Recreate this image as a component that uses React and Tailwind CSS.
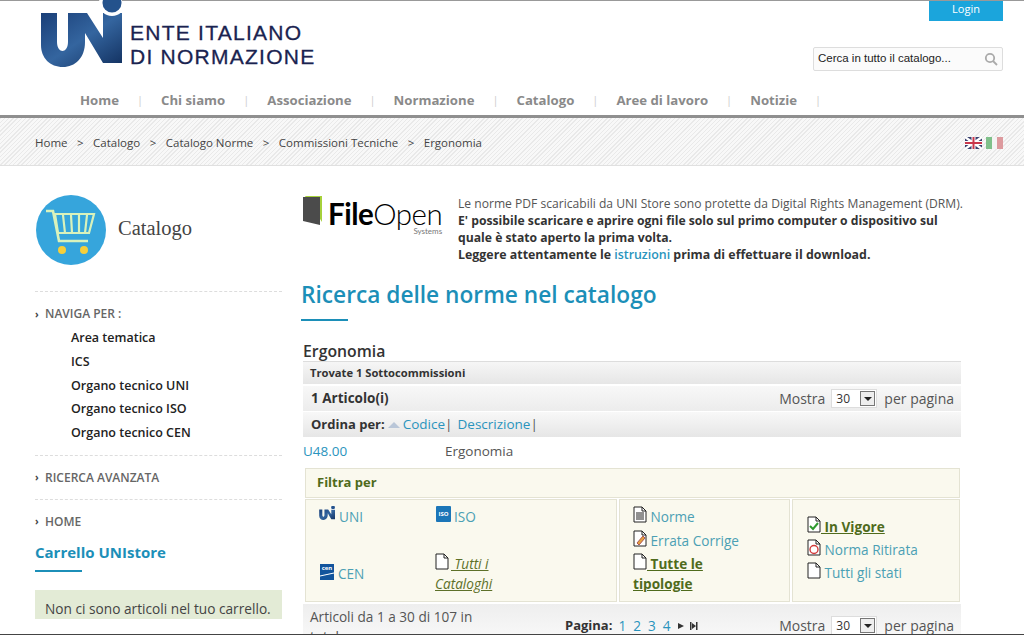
import React from 'react';

const NAV = ['Home', 'Chi siamo', 'Associazione', 'Normazione', 'Catalogo', 'Aree di lavoro', 'Notizie'];
const CRUMBS = ['Home', 'Catalogo', 'Catalogo Norme', 'Commissioni Tecniche', 'Ergonomia'];
const NAVIGA = ['Area tematica', 'ICS', 'Organo tecnico UNI', 'Organo tecnico ISO', 'Organo tecnico CEN'];

function UniLogo({ className }) {
  return (
    <svg viewBox="0 0 82 68" className={className}>
      <defs>
        <linearGradient id="uni" x1="0" y1="0" x2="1" y2="1">
          <stop offset="0" stopColor="#1a3f78" />
          <stop offset="0.5" stopColor="#34659f" />
          <stop offset="1" stopColor="#12305f" />
        </linearGradient>
      </defs>
      <path
        d="M1 13H17V42C17 48 20 51 22.5 51C25 51 28 48 28 42V13H47L63 38V13H82V63H63L45 33V42C45 58 35 67 23 67C10 67 1 58 1 45Z"
        fill="url(#uni)"
      />
      <circle cx="72" cy="3" r="13" fill="#fff" />
      <circle cx="72" cy="3" r="9.5" fill="#24528c" />
    </svg>
  );
}

function CartIcon() {
  return (
    <div className="w-[70px] h-[70px] rounded-full bg-[#36a5dc] flex items-center justify-center">
      <svg viewBox="0 0 70 70" className="w-[70px] h-[70px]" fill="none" stroke="#d9f2bb" strokeWidth="2.2">
        <path d="M10 16h7l6 30h29" strokeWidth="2.6" />
        <path d="M19 19h39l-5 19H22z" />
        <path d="M27 20l2 18M35 20l1 18M43 20l0 18M51 20l-2 18" />
        <circle cx="26" cy="55" r="4" fill="#f6cf3a" stroke="none" />
        <circle cx="48" cy="55" r="4" fill="#f6cf3a" stroke="none" />
      </svg>
    </div>
  );
}

function FileOpenLogo() {
  return (
    <div className="w-[140px] h-[40px] shrink-0 flex items-start">
      <svg viewBox="0 0 20 30" className="w-[20px] h-[30px] mt-0">
        <path d="M2 1h17v26z" fill="#a6d13a" />
        <path d="M0 2l17 0v28L0 26z" fill="#4b4b4b" />
      </svg>
      <div className="ml-[5px] flex flex-col items-end font-['Lato',sans-serif] text-black">
        <div className="text-[29.5px] leading-[36px] mt-px whitespace-nowrap tracking-[-0.5px]">
          <span className="font-bold">File</span>
          <span className="font-light">Open</span>
        </div>
        <div className="text-[8px] leading-[6px] text-[#777] mt-[-4px]">Systems</div>
      </div>
    </div>
  );
}

function FileIcon({ children }) {
  return (
    <svg viewBox="0 0 14 17" className="w-[14px] h-[17px] inline-block align-[-1px]" fill="#fff" stroke="#222" strokeWidth="1">
      <path d="M1 1h8l4 4v11H1z" />
      <path d="M9 1v4h4" fill="none" />
      {children}
    </svg>
  );
}

function Select() {
  return (
    <span className="inline-flex w-[46px] h-[19px] bg-white border border-[#ddd] items-center justify-between pl-[4px] pr-px text-[12px] text-[#333]">
      30
      <span className="w-[15px] h-[15px] border border-[#777] bg-[#eee] flex items-center justify-center">
        <span className="w-0 h-0 border-x-[4px] border-x-transparent border-t-[4px] border-t-[#222]" />
      </span>
    </span>
  );
}

function PerPage() {
  return (
    <div className="flex items-center text-[14px] text-[#555]">
      Mostra
      <span className="ml-[6px] mr-[7px] flex"><Select /></span>
      per pagina
    </div>
  );
}

function SideLink({ children }) {
  return (
    <div className="flex items-center text-[12px] font-semibold text-[#666] h-[20px]">
      <span className="text-[10px] w-[10px] font-bold text-[#444]">›</span>
      {children}
    </div>
  );
}

function Dashed() {
  return <div className="border-t border-dashed border-[#ddd]" />;
}

export default function App() {
  return (
    <div className="relative h-[635px] w-[1024px] overflow-hidden flex flex-col bg-white border-b border-[#444] font-['Open_Sans',sans-serif]">
      {/* Header */}
      <header className="h-[115px] shrink-0 border-t border-[#999] pl-[40px] pr-[21px] flex flex-col">
        <div className="flex justify-between h-[87px]">
          <div className="flex h-[68px] mt-[-1px]">
            <UniLogo className="w-[82px] h-[68px]" />
            <div className="ml-[8px] mt-[21px] font-['Liberation_Sans',sans-serif] text-[21px] leading-[24px] text-[#1a2350] tracking-[1.25px] whitespace-nowrap [-webkit-text-stroke:0.3px_#1a2350]">
              <div>ENTE ITALIANO</div>
              <div>DI NORMAZIONE</div>
            </div>
          </div>
          <div className="flex flex-col items-end">
            <div className="w-[74px] h-[20px] bg-[#1ba5dc] text-white text-[11px] leading-[15px] text-center">Login</div>
            <div className="mt-[26px] w-[190px] h-[24px] border border-[#ddd] rounded-[2px] bg-[#fbfbfb] pl-[4px] pr-[4px] flex items-center justify-between font-['Liberation_Sans',sans-serif] text-[11.5px] text-[#222]">
              Cerca in tutto il catalogo...
              <svg viewBox="0 0 14 14" className="w-[14px] h-[14px]" fill="none" stroke="#aaa" strokeWidth="1.8">
                <circle cx="6" cy="6" r="4.2" />
                <path d="M9 9l4 4" />
              </svg>
            </div>
          </div>
        </div>
        <nav className="flex items-center pl-[40px] h-[25px] text-[13.2px] font-bold text-[#8a8a8a] whitespace-nowrap">
          {NAV.map((n) => (
            <React.Fragment key={n}>
              <span>{n}</span>
              <span className="mx-[18px] font-normal text-[11px] text-[#ccc]">|</span>
            </React.Fragment>
          ))}
        </nav>
      </header>

      {/* Breadcrumb */}
      <div className="h-[51px] shrink-0 border-t-[3px] border-[#8f8f8f] border-b border-b-[#e0e0e0] bg-[repeating-linear-gradient(135deg,#e9e9e9_0,#e9e9e9_1px,#f8f8f8_1px,#f8f8f8_3px)] pl-[35px] pr-[21px] flex items-center justify-between text-[11.5px] text-[#444]">
        <div className="flex items-center whitespace-nowrap pt-[2px]">
          {CRUMBS.map((c, i) => (
            <React.Fragment key={c}>
              {i > 0 && <span className="mx-[9.5px]">&gt;</span>}
              <span>{c}</span>
            </React.Fragment>
          ))}
        </div>
        <div className="flex gap-[4px] pt-[2px]">
          <svg viewBox="0 0 17 12" className="w-[17px] h-[12px]">
            <rect width="17" height="12" fill="#39406e" />
            <path d="M0 0l17 12M17 0L0 12" stroke="#fff" strokeWidth="2.4" />
            <path d="M8.5 0v12M0 6h17" stroke="#fff" strokeWidth="4" />
            <path d="M8.5 0v12M0 6h17" stroke="#c9374b" strokeWidth="2" />
          </svg>
          <div className="w-[17px] h-[12px] flex">
            <div className="flex-1 bg-[#7fc08a]" />
            <div className="flex-1 bg-[#f4f4f4]" />
            <div className="flex-1 bg-[#dd9a9e]" />
          </div>
        </div>
      </div>

      {/* Body */}
      <div className="flex pl-[35px] items-start">
        {/* Sidebar */}
        <aside className="w-[247px] shrink-0">
          <div className="flex items-center h-[70px] mt-[29px] pl-px">
            <CartIcon />
            <div className="ml-[12px] mt-[-4px] font-['Liberation_Serif',serif] text-[20.5px] text-[#444]">Catalogo</div>
          </div>
          <div className="mt-[26px]"><Dashed /></div>
          <div className="mt-[12px]"><SideLink>NAVIGA PER :</SideLink></div>
          <ul className="pl-[36px] mt-[2px] text-[12.5px] font-semibold text-[#222] leading-[23.75px]">
            {NAVIGA.map((n) => <li key={n}>{n}</li>)}
          </ul>
          <div className="mt-[10px]"><Dashed /></div>
          <div className="mt-[12px]"><SideLink>RICERCA AVANZATA</SideLink></div>
          <div className="mt-[11px]"><Dashed /></div>
          <div className="mt-[12px]"><SideLink>HOME</SideLink></div>
          <h3 className="mt-[8px] text-[15px] leading-[24px] font-bold text-[#1c8fb8]">Carrello UNIstore</h3>
          <div className="mt-[6px] w-[47px] h-[2px] bg-[#1c8fb8]" />
          <div className="mt-[18px] h-[29px] bg-[#e3ebd6] pl-[10px] pt-[8px] text-[13.7px] leading-[22px] text-[#444] whitespace-nowrap">
            Non ci sono articoli nel tuo carrello.
          </div>
        </aside>

        {/* Main column */}
        <main className="ml-[21px] w-[658px] shrink-0">
          <div className="flex mt-[29px]">
            <FileOpenLogo />
            <div className="ml-[15px] text-[12.1px] leading-[17px] text-[#555] whitespace-nowrap">
              Le norme PDF scaricabili da UNI Store sono protette da Digital Rights Management (DRM).
              <div className="font-bold text-[12.2px] text-[#333]">
                E' possibile scaricare e aprire ogni file solo sul primo computer o dispositivo sul
                <br />
                quale è stato aperto la prima volta.
                <br />
                <span className="text-[12.4px]">
                  Leggere attentamente le <span className="font-semibold text-[#2a94bd]">istruzioni</span> prima di effettuare il download.
                </span>
              </div>
            </div>
          </div>

          <h1 className="ml-[-2px] mt-[17px] text-[22.7px] leading-[30px] font-semibold text-[#1c8fb8] whitespace-nowrap">Ricerca delle norme nel catalogo</h1>
          <div className="ml-[-2px] mt-[9px] w-[47px] h-[2px] bg-[#1c8fb8]" />

          <h2 className="mt-[20px] text-[15.8px] leading-[20px] font-semibold text-[#333]">Ergonomia</h2>
          <div className="h-[23px] bg-gradient-to-b from-[#f6f6f6] to-[#e6e6e6] border-t border-[#ddd] pl-[7px] flex items-center text-[11.2px] font-bold text-[#333]">
            Trovate 1 Sottocommissioni
          </div>
          <div className="mt-[2px] h-[25px] bg-gradient-to-b from-[#f8f8f8] to-[#ececec] pl-[8px] pr-[7px] flex items-center justify-between">
            <span className="text-[13.5px] font-bold text-[#333]">1 Articolo(i)</span>
            <PerPage />
          </div>
          <div className="mt-px h-[25px] bg-gradient-to-b from-[#f8f8f8] to-[#e6e6e6] pl-[8px] flex items-center text-[13.5px] text-[#2a94bd]">
            <span className="font-bold text-[13px] text-[#333]">Ordina per:</span>
            <span className="ml-[3px] mr-[3px] w-0 h-0 border-x-[6px] border-x-transparent border-b-[6px] border-b-[#b9c6d8]" />
            Codice<span className="text-[#555]">|</span>
            <span className="ml-[5px]">Descrizione</span><span className="text-[#555]">|</span>
          </div>
          <div className="h-[30px] pb-[2px] flex items-center text-[13.5px]">
            <span className="w-[142px] text-[#2a94bd]">U48.00</span>
            <span className="text-[#555]">Ergonomia</span>
          </div>

          {/* Filters */}
          <div className="ml-[2px] w-[655px] mt-px h-[30px] bg-[#faf9ee] border border-[#e4e3d3] pl-[11px] flex items-center text-[13px] font-bold text-[#4f6b1c]">
            Filtra per
          </div>
          <div className="ml-[2px] w-[655px] mt-[1px] flex gap-[2px] h-[103px] text-[13.6px] text-[#4ba0b4] leading-[24px]">
            <div className="w-[312px] bg-[#faf9ee] border border-[#e4e3d3] grid grid-cols-[117px_1fr] grid-rows-[53px_1fr] pl-[13px] pt-[5px]">
              <div className="flex items-start">
                <UniLogo className="w-[16px] h-[15px] mr-[4px] mt-[1px]" />
                UNI
              </div>
              <div className="flex items-start">
                <span className="w-[15px] h-[16px] mr-[3px] mt-[1px] rounded-[1px] bg-[#1b76b8] text-white text-[6px] leading-[16px] text-center font-bold">ISO</span>
                ISO
              </div>
              <div className="flex items-start mt-[4px]">
                <span className="w-[14px] h-[16px] ml-px mr-[4px] mt-[2px] bg-[#12549c] flex flex-col items-center overflow-hidden">
                  <span className="text-white text-[6px] leading-[9px] font-bold">cen</span>
                  <span className="w-[16px] h-px bg-white -rotate-12 mt-px" />
                </span>
                CEN
              </div>
              <div className="ml-[-1px] mt-[-5px] w-[100px] italic underline text-[#5d7029] leading-[20px]">
                <FileIcon /><span className="ml-[2px]"> Tutti i Cataloghi</span>
              </div>
            </div>
            <div className="w-[171px] bg-[#faf9ee] border border-[#e4e3d3] pl-[13px] pt-[5px]">
              <div>
                <FileIcon><path d="M3 7h8M3 9h8M3 11h8M3 13h8" /></FileIcon> Norme
              </div>
              <div>
                <FileIcon><path d="M4 13l6-7 2 2-6 7z" fill="#e8a33d" stroke="#a55" /></FileIcon> Errata Corrige
              </div>
              <div className="font-bold underline text-[#4f6b1c] w-[120px] leading-[20px]">
                <FileIcon /> Tutte le tipologie
              </div>
            </div>
            <div className="w-[168px] bg-[#faf9ee] border border-[#e4e3d3] pl-[14px] pt-[15px] leading-[23px]">
              <div className="font-bold underline text-[#4f6b1c]">
                <FileIcon><path d="M3 10l3 3 5-6" stroke="#2f9a2f" strokeWidth="2" fill="none" /></FileIcon> In Vigore
              </div>
              <div>
                <FileIcon><circle cx="7" cy="10.5" r="4" stroke="#d23a3a" strokeWidth="1.4" fill="#fff" /></FileIcon> Norma Ritirata
              </div>
              <div>
                <FileIcon /> Tutti gli stati
              </div>
            </div>
          </div>

          {/* Pager */}
          <div className="mt-[2px] h-[40px] bg-gradient-to-b from-[#eeeeee] to-[#fafafa] pl-[7px] pr-[7px] flex items-start text-[13.6px] text-[#555]">
            <div className="w-[180px] leading-[20px] pt-[3px]">Articoli da 1 a 30 di 107 in totale</div>
            <div className="ml-[75px] flex items-center h-[20px] mt-[12px] text-[#2a94bd]">
              <span className="font-bold text-[13px] text-[#333] mr-[6px]">Pagina:</span>
              <span className="flex gap-[7px]"><span>1</span><span>2</span><span>3</span><span>4</span></span>
              <span className="ml-[7px] w-0 h-0 border-y-[3px] border-y-transparent border-l-[6px] border-l-[#333]" />
              <svg viewBox="0 0 8 8" className="ml-[6px] w-[8px] h-[8px]" fill="#333">
                <path d="M0 0h1.5v8H0zM2 1l4 3-4 3zM6 0h1.5v8H6z" />
              </svg>
            </div>
            <div className="ml-auto mt-[11px]"><PerPage /></div>
          </div>
        </main>
      </div>
    </div>
  );
}
